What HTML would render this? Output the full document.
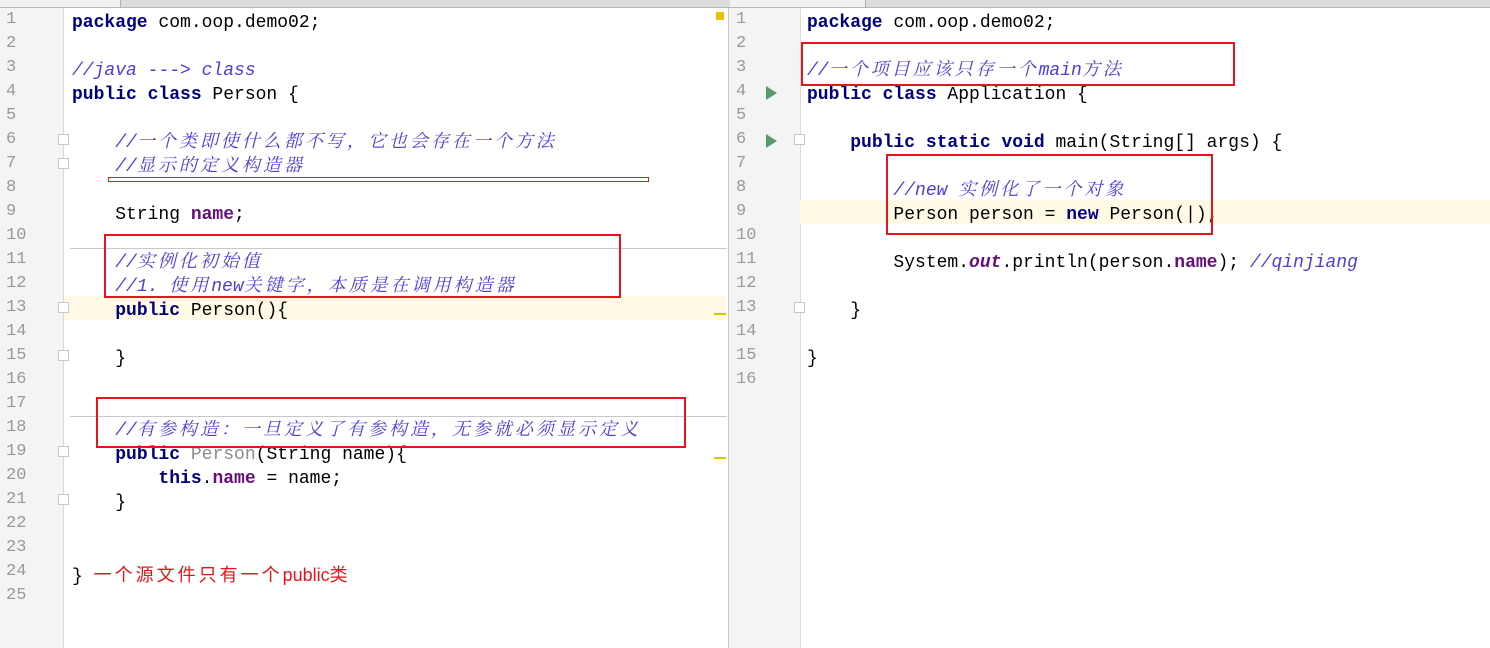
<!DOCTYPE html><html><head><meta charset="utf-8"><style>
body{margin:0;width:1490px;height:648px;background:#fff;position:relative;overflow:hidden;font-family:"Liberation Mono","Noto Sans CJK SC",monospace;font-size:18px}
.tabbar{position:absolute;top:0;left:0;width:1490px;height:7px;background:#dcdcdc;border-bottom:1px solid #b8b8b8}
.tab{position:absolute;top:0;height:7px;background:#f2f2f2;border-right:1px solid #b0b0b0}
.gut{position:absolute;top:8px;bottom:0;background:#f4f4f4;border-right:1px solid #dadada}
.ln{position:absolute;color:#999;font-size:17px;width:30px;height:24px;line-height:24px}
.l{position:absolute;height:24px;line-height:24px;white-space:pre;color:#000}
.k{color:#000080;font-weight:bold}
.c{color:#4b3fd6;font-style:italic;font-family:"Liberation Mono","Noto Serif CJK SC",monospace}
.z{letter-spacing:3px}
.f{color:#660e7a;font-weight:bold}
.g{color:#8c8c8c}
.cur{position:absolute;height:24px;background:#fffae6}
.box{position:absolute;border:2px solid #e8141c;box-sizing:border-box}
.sep{position:absolute;height:1px;background:#c8c8c8}
.run{position:absolute;width:0;height:0;border-left:11px solid #5a9a6a;border-top:7px solid transparent;border-bottom:7px solid transparent}
.fold{position:absolute;width:9px;height:9px;border:1px solid #c8c8c8;background:#fff}
</style></head><body>
<div class="tabbar"></div>
<div class="tab" style="left:0;width:120px"></div>
<div class="tab" style="left:730px;width:135px"></div>
<div class="gut" style="left:0;width:63px"></div>
<div class="gut" style="left:728px;width:71px;border-left:1px solid #c8c8c8"></div>
<div class="cur" style="left:64px;width:663px;top:296px"></div>
<div class="cur" style="left:800px;width:690px;top:200px"></div>
<div class="sep" style="left:70px;width:657px;top:248px"></div>
<div class="sep" style="left:70px;width:657px;top:416px"></div>
<div style="position:absolute;left:716px;top:12px;width:8px;height:8px;background:#e8c000"></div>
<div style="position:absolute;left:714px;top:313px;width:12px;height:2px;background:#e8c000"></div>
<div style="position:absolute;left:714px;top:457px;width:12px;height:2px;background:#e8c000"></div>
<div id="L"></div>
<div class="run" style="left:766px;top:86px"></div>
<div class="run" style="left:766px;top:134px"></div>
<div class="fold" style="left:58px;top:134px"></div><div class="fold" style="left:58px;top:158px"></div>
<div class="fold" style="left:58px;top:302px"></div><div class="fold" style="left:58px;top:350px"></div>
<div class="fold" style="left:58px;top:446px"></div><div class="fold" style="left:58px;top:494px"></div>
<div class="fold" style="left:794px;top:134px"></div><div class="fold" style="left:794px;top:302px"></div>
<script>
var L=[
"<span class=k>package</span> com.oop.demo02;","","<span class=c>//java ---&gt; class</span>","<span class=k>public class</span> Person {","",
"    <span class=c>//一个类即使什么都不写，它也会存在一个方法</span>","    <span class=c>//显示的定义构造器</span>","","    String <span class=f>name</span>;","",
"    <span class=c>//实例化初始值</span>","    <span class=c>//1. 使用new关键字，本质是在调用构造器</span>","    <span class=k>public</span> Person(){","","    }","","",
"    <span class=c>//有参构造：一旦定义了有参构造，无参就必须显示定义</span>","    <span class=k>public</span> <span class=g>Person</span>(String name){","        <span class=k>this</span>.<span class=f>name</span> = name;","    }","","","} <span style=\"color:#e8141c;font-family:'Liberation Sans','Noto Sans CJK SC',sans-serif\">一个源文件只有一个public类</span>",""];
var R=[
"<span class=k>package</span> com.oop.demo02;","","<span class=c>//一个项目应该只存一个main方法</span>","<span class=k>public class</span> Application {","",
"    <span class=k>public static void</span> main(String[] args) {","","        <span class=c>//new 实例化了一个对象</span>","        Person person = <span class=k>new</span> Person(|);","",
"        System.<span class=f style=\"font-style:italic\">out</span>.println(person.<span class=f>name</span>); <span class=c>//qinjiang</span>","","    }","","}",""];
function z(s){return s.replace(/([\u3000-\u9fff\uff00-\uffef]+)/g,'<span class=z>$1</span>');}
var h="";
L.forEach(function(s,i){var t=8+i*24;h+='<div class=ln style="left:6px;top:'+t+'px">'+(i+1)+'</div><div class=l style="left:72px;top:'+(t+3)+'px">'+z(s)+'</div>';});
R.forEach(function(s,i){var t=8+i*24;h+='<div class=ln style="left:736px;top:'+t+'px">'+(i+1)+'</div><div class=l style="left:807px;top:'+(t+3)+'px">'+z(s)+'</div>';});
document.getElementById("L").innerHTML=h;
</script>
<div class="box" style="left:108px;top:177px;width:541px;height:5px;border-width:1.5px"></div>
<div class="box" style="left:104px;top:234px;width:517px;height:64px"></div>
<div class="box" style="left:96px;top:397px;width:590px;height:51px"></div>
<div class="box" style="left:801px;top:42px;width:434px;height:44px"></div>
<div class="box" style="left:886px;top:154px;width:327px;height:81px"></div>
</body></html>
